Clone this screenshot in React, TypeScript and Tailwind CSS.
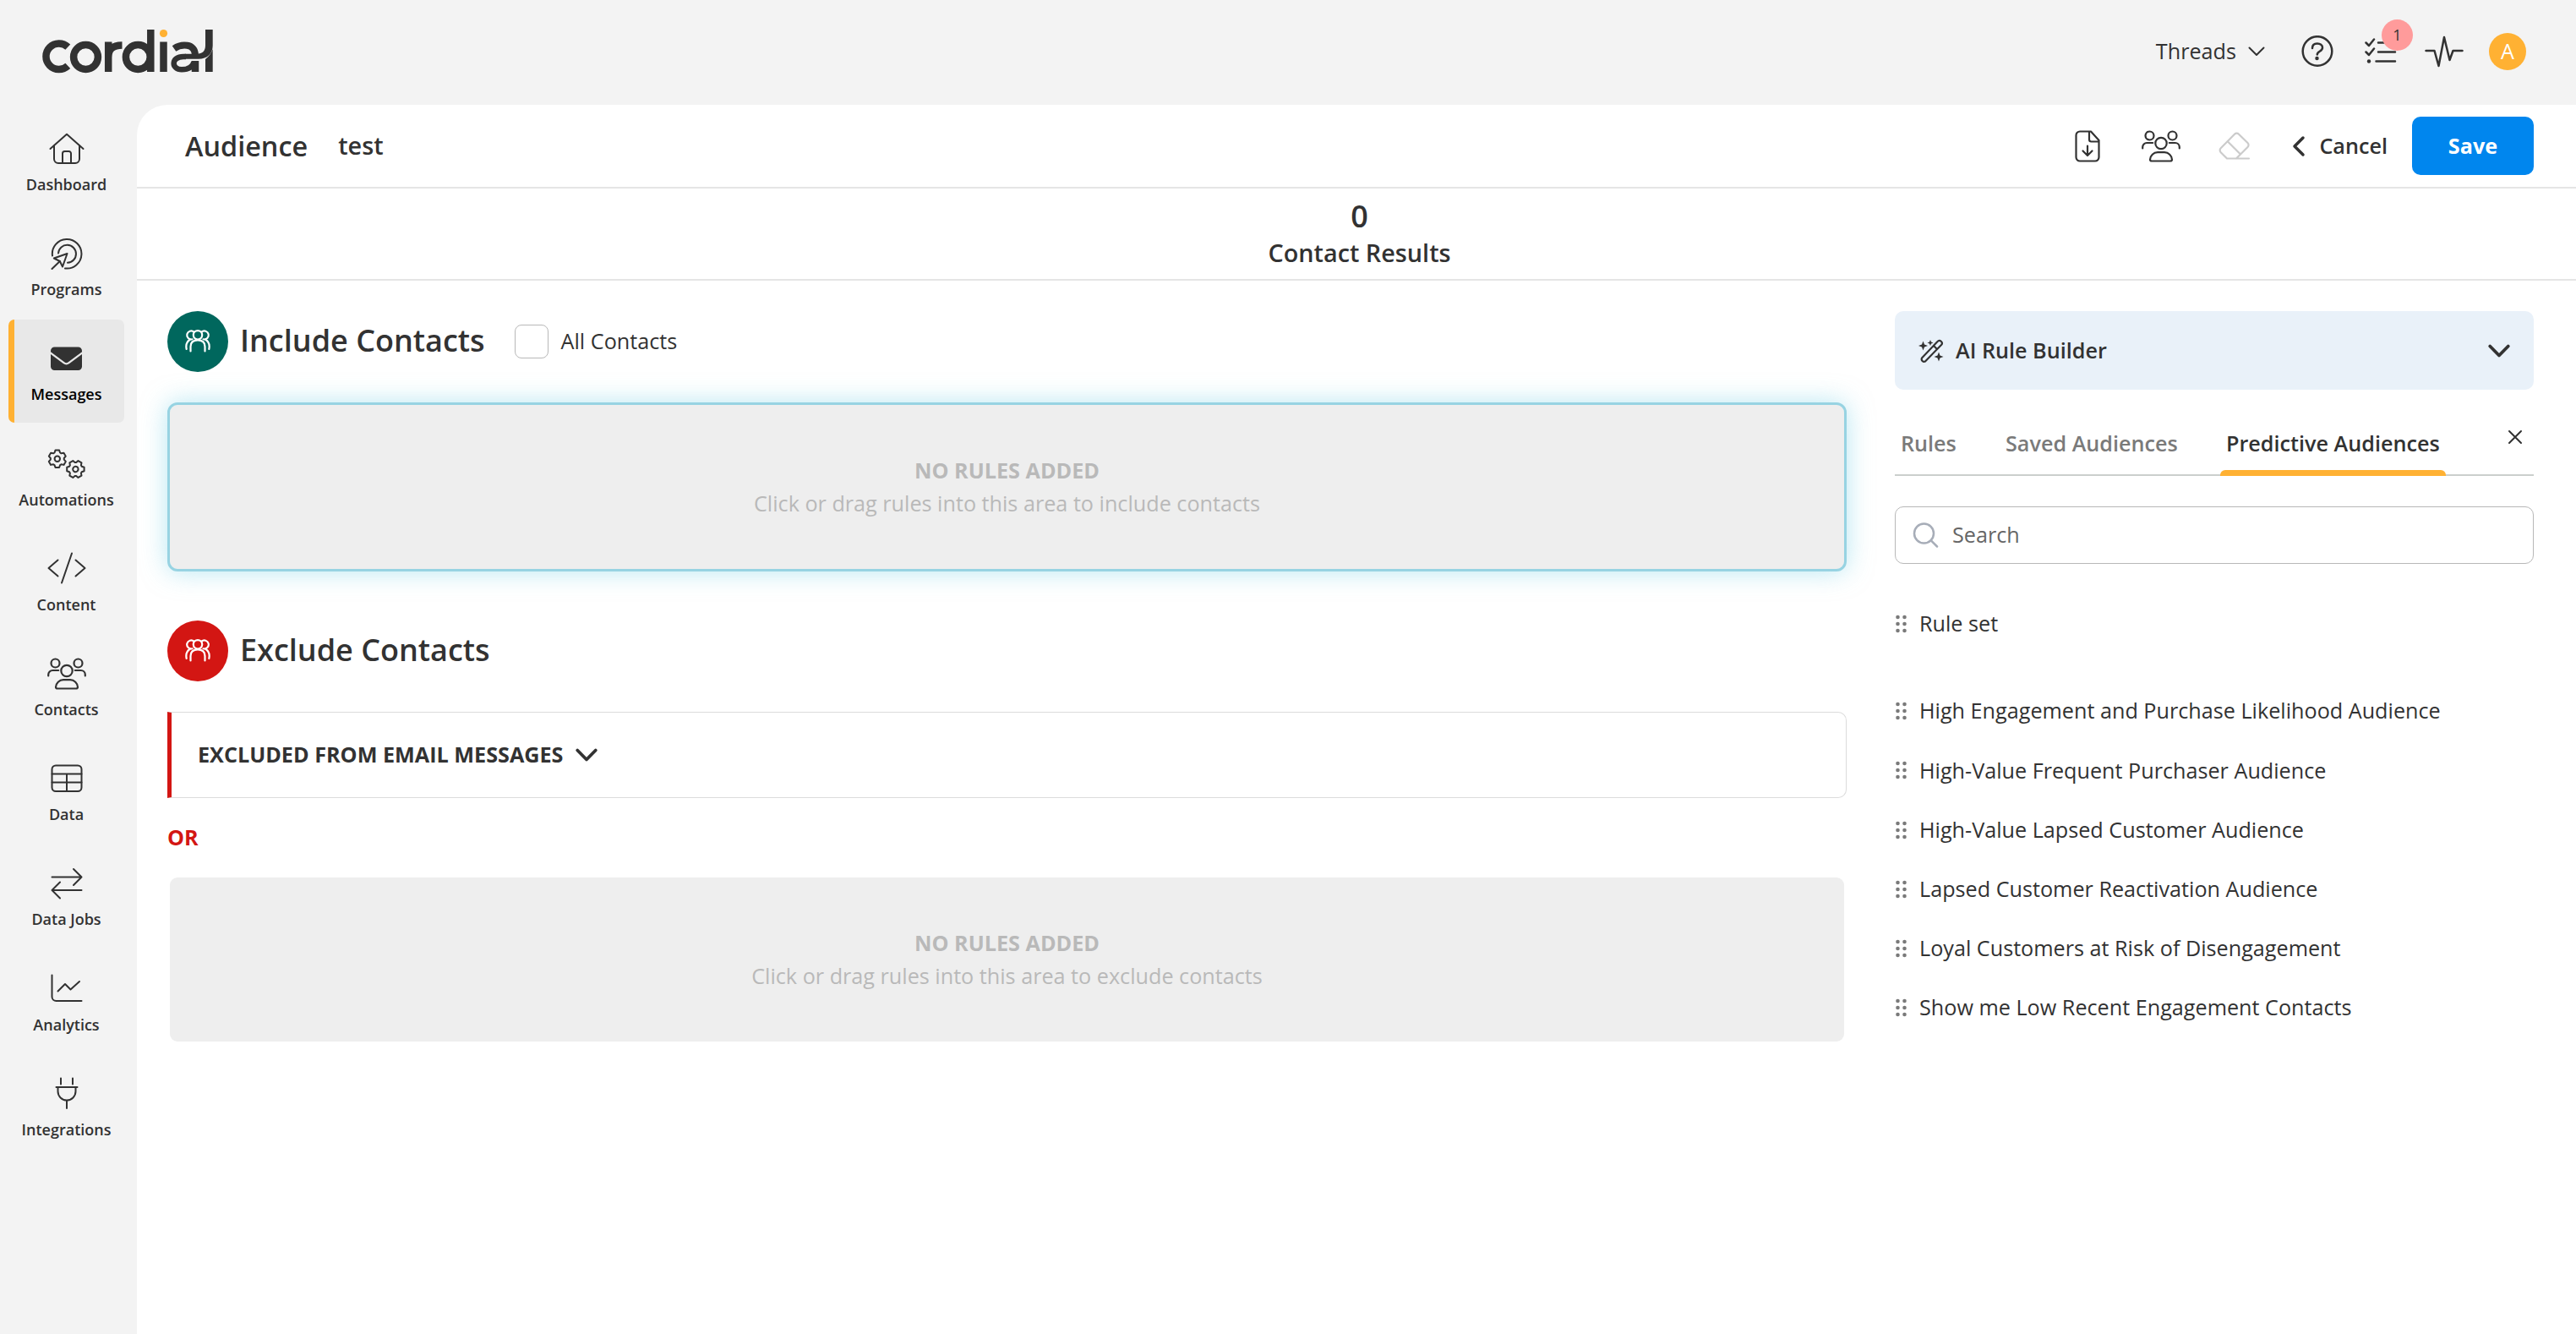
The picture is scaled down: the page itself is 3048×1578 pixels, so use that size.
import React from "react";

const Icon: React.FC<{ w: number; h: number; sw?: number; children: React.ReactNode }> = ({ w, h, sw = 2, children }) => (
  <svg
    width={w}
    height={h}
    viewBox={`0 0 ${w} ${h}`}
    fill="none"
    stroke="currentColor"
    strokeWidth={sw}
    strokeLinecap="round"
    strokeLinejoin="round"
    className="shrink-0"
  >
    {children}
  </svg>
);

const UsersIcon = () => (
  <Icon w={46} h={38} sw={2.2}>
    <circle cx="9.5" cy="6.5" r="5" />
    <circle cx="36.5" cy="6.5" r="5" />
    <circle cx="23" cy="15.5" r="6.7" />
    <path d="M1.2 21.5V20a5 5 0 0 1 5-5h7" />
    <path d="M44.8 21.5V20a5 5 0 0 0-5-5h-7" />
    <path d="M12 36.5h22c1.3 0 2-.7 2-1.7a9 9 0 0 0-9-8.600h-8a9 9 0 0 0-9 8.600c0 1 .7 1.700 2 1.700z" />
  </Icon>
);

// six-toothed gear around the origin
const gearPoints = [0, 60, 120, 180, 240, 300]
  .flatMap((deg) => {
    const a = (deg * Math.PI) / 180;
    return [
      [-3.3, -7.3],
      [-2.3, -10.2],
      [2.3, -10.2],
      [3.3, -7.3],
    ].map(([x, y]) => `${(x * Math.cos(a) - y * Math.sin(a)).toFixed(2)},${(x * Math.sin(a) + y * Math.cos(a)).toFixed(2)}`);
  })
  .join(" ");

const navItems = [
  {
    label: "Dashboard",
    icon: (
      <Icon w={42} h={38}>
        <path d="M1.5 19 21 1.8 40.5 19" />
        <path d="M6 15.5V31a5 5 0 0 0 5 5h20a5 5 0 0 0 5-5V15.5" />
        <path d="M16 36V24.5a2.500 2.500 0 0 1 2.500-2.500h5a2.500 2.500 0 0 1 2.500 2.500V36" />
      </Icon>
    ),
  },
  {
    label: "Programs",
    icon: (
      <Icon w={38} h={38}>
        <path d="M2 21.500A17.300 17.300 0 1 1 17 36.400" />
        <path d="M9 18.500A10.500 10.500 0 1 1 20 29.800" />
        <path d="M19.500 19 3.800 24.500l7 3.500 3.200 6.500z" />
        <path d="M10.800 28 1.500 37" />
      </Icon>
    ),
  },
  {
    label: "Messages",
    icon: (
      <svg width="37" height="28" viewBox="0 0 37 28" fill="currentColor">
        <path d="M0 6.200V5a4.500 4.500 0 0 1 4.500-4.500h28A4.500 4.500 0 0 1 37 5v1.200L20.800 18.300a3.800 3.800 0 0 1-4.600 0z" />
        <path d="M0 9v14.500A4.500 4.500 0 0 0 4.500 28h28a4.500 4.500 0 0 0 4.500-4.500V9L22.200 20a6 6 0 0 1-7.400 0z" />
      </svg>
    ),
  },
  {
    label: "Automations",
    icon: (
      <Icon w={46} h={38}>
        <g transform="translate(11.8 13.8)">
          <polygon points={gearPoints} />
          <circle r="3.2" />
        </g>
        <g transform="translate(33.4 26) rotate(30)">
          <polygon points={gearPoints} />
          <circle r="3.2" />
        </g>
      </Icon>
    ),
  },
  {
    label: "Content",
    icon: (
      <Icon w={46} h={38}>
        <path d="M12.500 9.500 1.500 19l11 9.500M33.500 9.500l11 9.500-11 9.500M29 1.500 17 36.500" />
      </Icon>
    ),
  },
  { label: "Contacts", icon: <UsersIcon /> },
  {
    label: "Data",
    icon: (
      <Icon w={38} h={34}>
        <rect x="1.500" y="1.500" width="35" height="30.500" rx="4.500" />
        <path d="M1.500 11.500h35M1.500 21.500h35M19 11.500V32" />
      </Icon>
    ),
  },
  {
    label: "Data Jobs",
    icon: (
      <Icon w={38} h={38}>
        <path d="M1.500 11.500H36.500M27 2l9.500 9.500-9.500 9.500M36.500 27H1.500M11 17.500 1.500 27l9.500 9.500" />
      </Icon>
    ),
  },
  {
    label: "Analytics",
    icon: (
      <Icon w={38} h={34}>
        <path d="M1.500 1.500V27a5 5 0 0 0 5 5h30M8.500 20.500l8.500-8.500 6.500 6.500L34 9" />
      </Icon>
    ),
  },
  {
    label: "Integrations",
    icon: (
      <Icon w={28} h={38}>
        <path d="M7 1.500v7M21 1.500v7M1.500 12h25M3.500 12v5a10.500 10.500 0 0 0 21 0v-5M14 28v9" />
      </Icon>
    ),
  },
];

const audiences = [
  "High Engagement and Purchase Likelihood Audience",
  "High-Value Frequent Purchaser Audience",
  "High-Value Lapsed Customer Audience",
  "Lapsed Customer Reactivation Audience",
  "Loyal Customers at Risk of Disengagement",
  "Show me Low Recent Engagement Contacts",
];

const Logo = () => (
  <svg width="204" height="54" viewBox="0 0 204 54" fill="none" stroke="#323232" strokeWidth="8.500" className="shrink-0">
    <path d="M30.300 21.700a15.300 15.300 0 1 0 0 22.200" />
    <circle cx="51.500" cy="33.500" r="14.400" />
    <path d="M78.200 51V15.500M78.200 34c0-9.500 5-14.600 16.300-14.600" />
    <circle cx="113.300" cy="33.500" r="14.400" />
    <path d="M128.300 1v50M143.500 15.500V51" />
    <circle cx="143.500" cy="5.500" r="4.600" fill="#ffb133" stroke="none" />
    <path d="M156 23.500c8-5.500 25-7 25 8" strokeWidth="8" />
    <path d="M193 1h8.700v19c0 9-6 15.800-17 15.800h-16v-6h14c7 0 10.300-3.500 10.300-10z" fill="#323232" stroke="none" />
    <path d="M170 33h-3c-15 0-14.500 15.300-2 15.300 8 0 13-3 14.500-9" strokeWidth="6.500" />
    <path d="M181 38v13" />
    <path d="M193 36c4-3 7-7 8.700-12v27H193z" fill="#323232" stroke="none" />
  </svg>
);

const Chevron = () => (
  <Icon w={28} h={18} sw={3.8}>
    <path d="M3.200 3.500 14 14.500 24.800 3.500" />
  </Icon>
);

const GroupBadge: React.FC<{ className: string }> = ({ className }) => (
  <div className={`flex size-[72px] items-center justify-center rounded-full text-white ${className}`}>
    <Icon w={32} h={30} sw={2.2}>
      <circle cx="16" cy="7.300" r="5.200" />
      <path d="M11.500 3.700a5 5 0 1 0-2 8.600M20.500 3.700a5 5 0 1 1 2 8.600" />
      <path d="M7.500 26.500v-5.500c0-5 3.300-7.700 8.500-7.700s8.500 2.700 8.500 7.700v5.500M2.700 24c-1-4.500.3-9 4.300-11.500M29.300 24c1-4.500-.3-9-4.300-11.500" />
    </Icon>
  </div>
);

const DropArea: React.FC<{ hint: string; className: string }> = ({ hint, className }) => (
  <div
    className={`flex h-[200px] flex-col items-center justify-center rounded-[12px] border-[3px] bg-[#eee] bg-clip-padding leading-[39px] text-[#b9b9b9] ${className}`}
  >
    <div className="font-bold">NO RULES ADDED</div>
    <div>{hint}</div>
  </div>
);

const RuleRow: React.FC<{ label: string }> = ({ label }) => (
  <div className="flex h-[70.2px] items-center gap-[14px]">
    <svg width="15" height="22" viewBox="0 0 15 22" fill="#7a7a7a" className="shrink-0">
      {[3, 11, 19].map((cy) => (
        <g key={cy}>
          <circle cx="3.500" cy={cy} r="2.300" />
          <circle cx="11.500" cy={cy} r="2.300" />
        </g>
      ))}
    </svg>
    <span>{label}</span>
  </div>
);

const App: React.FC = () => {
  return (
    <div className="flex h-[1578px] w-[3048px] flex-col overflow-hidden bg-[#f3f3f3] font-['Open_Sans',sans-serif] text-[25.2px] text-[#323232]">
      <header className="flex h-[124px] shrink-0 items-center justify-between pr-[59px] pb-[2px] pl-[50px]">
        <Logo />
        <div className="flex items-center">
          <span>Threads</span>
          <div className="ml-[14px]">
            <Icon w={20} h={12} sw={2}>
              <path d="M1.500 1.500l8.500 8.500 8.500-8.500" />
            </Icon>
          </div>
          <div className="ml-[43px]">
            <Icon w={38} h={38} sw={2.5}>
              <circle cx="19" cy="18.500" r="17.300" />
              <path d="M13 15c0-4 2.500-5.500 5.800-5.500 3.500 0 6.200 1.800 6.200 5 0 4.500-6.200 4-6.200 8" />
              <circle cx="18.500" cy="27" r="1" fill="currentColor" />
            </Icon>
          </div>
          <div className="relative mb-[3px] ml-[37px]">
            <Icon w={38} h={30} sw={2.5}>
              <path d="M1.500 5.500 5 9l6-7.500M1.500 16.500 5 20l6-7.500M16 5.500h20M16 16.500h20M13.500 27.500h22.500" />
              <circle cx="5" cy="27.500" r="2.200" fill="currentColor" stroke="none" />
            </Icon>
            <span className="absolute -top-[22px] left-[20px] flex size-[37px] items-center justify-center rounded-full bg-[#ff9b9b] text-[18px]">
              1
            </span>
          </div>
          <div className="ml-[33px]">
            <Icon w={46} h={38} sw={2.5}>
              <path d="M1.500 18h10l5 18L23 2l6.500 27 4-11h11" />
            </Icon>
          </div>
          <div className="ml-[30px] flex size-[44px] items-center justify-center rounded-full bg-[#ffb133] text-white">
            A
          </div>
        </div>
      </header>

      <div className="flex grow">
        <nav className="flex w-[162px] shrink-0 flex-col gap-[2.2px] pt-[5.6px] pl-[10px]">
          {navItems.map((item) => (
            <a
              key={item.label}
              className={
                item.label === "Messages"
                  ? "flex h-[122px] w-[137px] flex-col items-center rounded-[7px] border-l-[7px] border-[#ffb133] bg-[#e8e8e8] pt-[21px] pr-[7px] text-black"
                  : "flex h-[122px] w-[137px] flex-col items-center pt-[21px]"
              }
            >
              <span className="flex h-[50px] items-center text-[#323232]">{item.icon}</span>
              <span className="mt-[5.5px] text-[18px] leading-6 font-semibold whitespace-nowrap">{item.label}</span>
            </a>
          ))}
        </nav>

        <main className="flex grow flex-col rounded-tl-[36px] bg-white">
          <div className="flex h-[99px] shrink-0 items-center border-b-2 border-[#e5e5e5] pr-[50px] pl-[57px]">
            <h1 className="text-[32.4px] font-semibold">Audience</h1>
            <span className="mb-[2px] ml-[36px] text-[28.8px] font-semibold">test</span>
            <div className="ml-auto flex items-center">
              <Icon w={30} h={38} sw={2.2}>
                <path d="M6 1.500h13L28.500 12v20a4.500 4.500 0 0 1-4.500 4.500H6A4.500 4.500 0 0 1 1.500 32V6A4.500 4.500 0 0 1 6 1.500zM17 1.500V11a2.500 2.500 0 0 0 2.500 2.500h9M15 18.500V29M9.500 24.500 15 30l5.500-5.500" />
              </Icon>
              <div className="ml-[49px]">
                <UsersIcon />
              </div>
              <div className="ml-[45px] text-[#cbcbcb]">
                <Icon w={38} h={34} sw={2.2}>
                  <path d="M10 31.500h26M10 31.500l-7.300-7.300a3.500 3.500 0 0 1 0-5L19 2.700a3.500 3.500 0 0 1 5 0L34.500 13a3.500 3.500 0 0 1 0 5L21 31.500M11 11.500l15 15" />
                </Icon>
              </div>
              <div className="ml-[48px]">
                <Icon w={18} h={26} sw={3.5}>
                  <path d="M14 3 4 13l10 10" />
                </Icon>
              </div>
              <span className="ml-[15px] font-semibold">Cancel</span>
              <button className="ml-[29px] h-[69px] w-[144px] rounded-[10px] bg-[#0086ee] font-bold text-white">Save</button>
            </div>
          </div>

          <div className="flex h-[109px] shrink-0 flex-col items-center justify-center border-b-2 border-[#e5e5e5] pt-[1px] pl-[7px] font-semibold">
            <div className="text-[36px] leading-[44px]">0</div>
            <div className="text-[28.8px] leading-[42px]">Contact Results</div>
          </div>

          <div className="flex justify-between pt-[36px] pr-[50px] pl-[36px]">
            <section className="w-[1987px]">
              <div className="flex h-[72px] items-center">
                <GroupBadge className="bg-[#00675d]" />
                <h2 className="mb-[2px] ml-[14px] text-[36px] font-semibold">Include Contacts</h2>
                <div className="ml-[35px] size-[40px] rounded-[8px] border border-[#b8b8b8]" />
                <span className="mb-[1px] ml-[15px]">All Contacts</span>
              </div>
              <DropArea
                hint="Click or drag rules into this area to include contacts"
                className="mt-[36px] border-[#97d3e2] shadow-[0_0_30px_rgba(125,211,232,0.55)]"
              />

              <div className="mt-[58px] flex h-[72px] items-center">
                <GroupBadge className="bg-[#d31613]" />
                <h2 className="mb-[2px] ml-[14px] text-[36px] font-semibold">Exclude Contacts</h2>
              </div>
              <div className="mt-[36px] flex h-[102px] items-center rounded-r-[10px] border border-l-[5px] border-[#dcdcdc] border-l-[#d31613] pl-[31px]">
                <span className="font-bold">EXCLUDED FROM EMAIL MESSAGES</span>
                <div className="ml-[13px]">
                  <Chevron />
                </div>
              </div>
              <div className="mt-[26px] leading-10 font-bold text-[#d31613]">OR</div>
              <DropArea hint="Click or drag rules into this area to exclude contacts" className="mt-[25px] border-transparent" />
            </section>

            <aside className="w-[756px]">
              <div className="flex h-[93px] items-center rounded-[10px] bg-[#e9f1f9] pr-[27px] pl-[28px]">
                <Icon w={30} h={28} sw={2.2}>
                  <path d="M4 22.500 22.500 3a3 3 0 0 1 4.500 4L8 26.500a3 3 0 0 1-4-4zM18 8l4 4" />
                  <path
                    d="M5.500 2.500 7 6.500 11 8 7 9.500 5.500 13.500 4 9.500 0 8 4 6.500zM14 1l1 2.500L17.500 4.500 15 5.500 14 8l-1-2.500L10.500 4.500 13 3.500zM24 15.500l1.500 4 4 1.500-4 1.500-1.500 4-1.500-4-4-1.500 4-1.500z"
                    fill="currentColor"
                    stroke="none"
                  />
                </Icon>
                <span className="ml-[14px] font-semibold">AI Rule Builder</span>
                <div className="ml-auto">
                  <Chevron />
                </div>
              </div>

              <div className="mt-[30px] flex h-[72px] border-b-2 border-[#cbcfcd] font-semibold text-[#7a7a7a]">
                <span className="w-[123px] pt-[15px] pl-[7px]">Rules</span>
                <span className="w-[262px] pt-[15px] pl-[8px]">Saved Audiences</span>
                <span className="relative w-[267px] pt-[15px] pl-[7px] whitespace-nowrap text-[#323232]">
                  Predictive Audiences
                  <span className="absolute -bottom-[2px] left-0 h-[7px] w-full rounded-t-[6px] bg-[#ffb133]" />
                </span>
                <span className="mt-[17px] mr-[13px] ml-auto text-[#323232]">
                  <Icon w={18} h={18} sw={2}>
                    <path d="M2 2l14 14M16 2 2 16" />
                  </Icon>
                </span>
              </div>

              <div className="mt-[36px] flex h-[68px] items-center rounded-[10px] border border-[#b8b8b8] pl-[20px] text-[#666]">
                <span className="text-[#a7adb8]">
                  <Icon w={31} h={30} sw={2.5}>
                    <circle cx="13.500" cy="13" r="11.500" />
                    <path d="M22 21.500l7 7" />
                  </Icon>
                </span>
                <span className="ml-[16px]">Search</span>
              </div>

              <div className="mt-[36px]">
                <RuleRow label="Rule set" />
              </div>
              <div className="mt-[33px]">
                {audiences.map((name) => (
                  <RuleRow key={name} label={name} />
                ))}
              </div>
            </aside>
          </div>
        </main>
      </div>
    </div>
  );
};

export default App;
